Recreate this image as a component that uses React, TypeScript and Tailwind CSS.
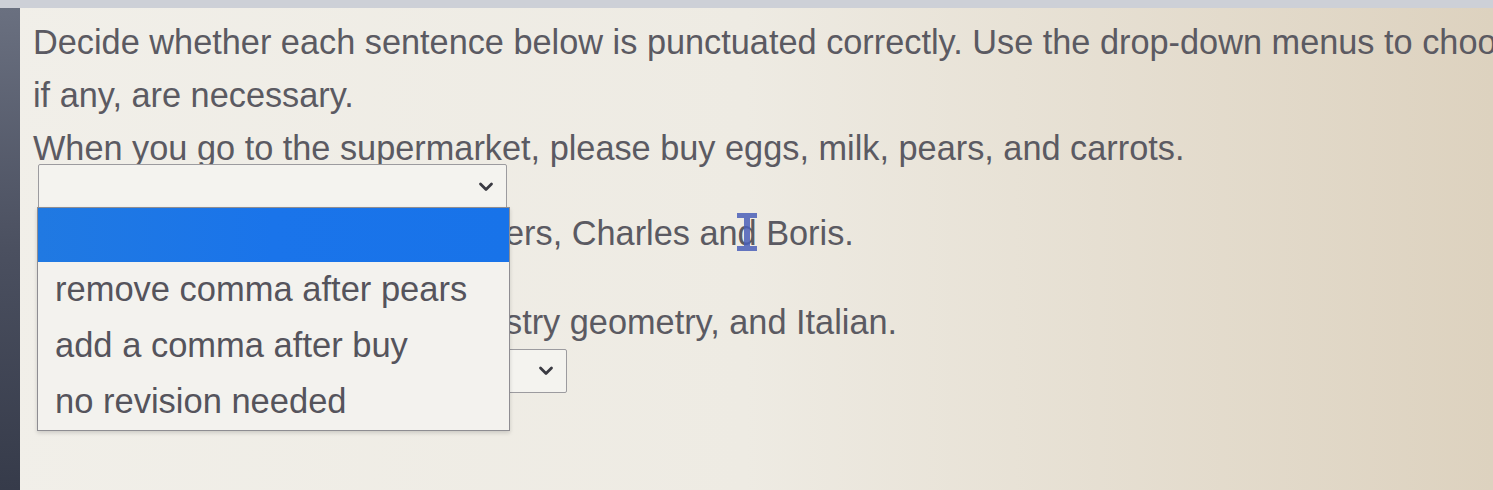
import React from "react";

const OPTIONS = ["remove comma after pears", "add a comma after buy", "no revision needed"];

function Chevron() {
  return (
    <svg width="16" height="10" viewBox="0 0 16 10" aria-hidden="true">
      <path d="M2.5 2 L8 7.5 L13.5 2" fill="none" stroke="#3a3a42" strokeWidth="2.8" strokeLinecap="round" strokeLinejoin="round" />
    </svg>
  );
}

function FakeSelect({ width, height, children }: { width: string; height: string; children?: React.ReactNode }) {
  return (
    <div className={`relative ml-[5px] ${width} ${height}`}>
      <div className="flex h-full w-full items-center justify-end rounded-[2px] border border-[#9c9b9f] bg-[#f4f3ef] pr-[12px]">
        <Chevron />
      </div>
      {children}
    </div>
  );
}

function OpenList() {
  return (
    <div className="absolute left-[-1px] top-[43px] z-10 w-[473px] border border-[#8e8d92] bg-[#f3f2ee] shadow-[0_2px_4px_rgba(0,0,0,0.15)]">
      <div className="h-[54px] bg-gradient-to-r from-[#2079e2] via-[#1a74ea] to-[#1873e9]" />
      {OPTIONS.map((o) => (
        <div key={o} className="flex h-[56px] items-center whitespace-nowrap pl-[17px] text-[34.5px] text-[#55545c]">
          {o}
        </div>
      ))}
    </div>
  );
}

export default function App() {
  return (
    <div className="relative flex h-[490px] w-[1493px] flex-col overflow-hidden bg-gradient-to-r from-[#f1efe9] via-[#eeebe3] to-[#ddd2bf] font-['Liberation_Sans',Arial,sans-serif] text-[#5b5a62]">
      <div className="h-[8px] bg-[#cdd0d7]" />
      <div className="flex flex-1">
        <div className="w-[20px] bg-gradient-to-b from-[#6a7080] via-[#4b5060] to-[#363b4a]" />
        <div className="flex-1 overflow-hidden pl-[13px] pt-[8px]">
          <div className="text-[34.3px] leading-[53px]">
            <p className="whitespace-nowrap">
              Decide whether each sentence below is punctuated correctly. Use the drop-down menus to choose which revisions,
            </p>
            <p className="whitespace-nowrap">if any, are necessary.</p>
          </div>

          <p className="mt-[10px] whitespace-nowrap text-[34.3px] leading-[32px]">
            When you go to the supermarket, please buy eggs, milk, pears, and carrots.
          </p>
          <FakeSelect width="w-[469px]" height="h-[46px]">
            <OpenList />
          </FakeSelect>

          <p className="ml-[5px] mt-[7px] whitespace-nowrap text-[34.3px] leading-[32px]">
            I went hiking with my two brothers, Charles and Boris.
          </p>
          <FakeSelect width="w-[472px]" height="h-[47px]" />

          <p className="ml-[5px] mt-[10px] whitespace-nowrap text-[34.3px] leading-[32px]">
            This autumn I am taking chemistry geometry, and Italian.
          </p>
          <div className="mt-[11px]">
            <FakeSelect width="w-[529px]" height="h-[44px]" />
          </div>
        </div>
      </div>

      <svg className="absolute left-[736px] top-[212px]" width="22" height="40" viewBox="0 0 22 40" aria-hidden="true">
        <path d="M1 1 H21 V6 H14 V34 H21 V39 H1 V34 H8 V6 H1 Z" fill="#4a5fb8" fillOpacity="0.85" />
      </svg>
    </div>
  );
}
